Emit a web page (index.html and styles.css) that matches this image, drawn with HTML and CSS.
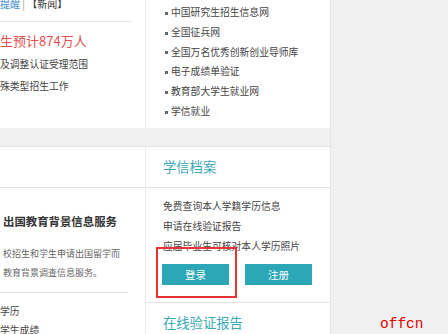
FILE: index.html
```html
<!DOCTYPE html>
<html lang="zh-CN">
<head>
    <meta charset="UTF-8">
    <meta name="viewport" content="width=device-width, initial-scale=1.0">
    <title>学信网</title>
    <link rel="stylesheet" href="styles.css">
</head>
<body>
    <div class="page">
        <div class="main">
            <div class="row row-top">
                <div class="col-left">
                    <div class="news-links"><a class="blue" href="#">提醒</a> <span class="sep">|</span> 【新闻】</div>
                    <div class="headline">生预计874万人</div>
                    <div class="plain-list">
                        <div>及调整认证受理范围</div>
                        <div>殊类型招生工作</div>
                    </div>
                </div>
                <div class="col-right">
                    <ul class="link-list">
                        <li>中国研究生招生信息网</li>
                        <li>全国征兵网</li>
                        <li>全国万名优秀创新创业导师库</li>
                        <li>电子成绩单验证</li>
                        <li>教育部大学生就业网</li>
                        <li>学信就业</li>
                    </ul>
                </div>
            </div>

            <div class="row row-bottom">
                <div class="col-left">
                    <div class="card-head"></div>
                    <div class="service">
                        <div class="service-title">出国教育背景信息服务</div>
                        <div class="service-desc">
                            <div>校招生和学生申请出国留学而</div>
                            <div>教育背景调查信息服务。</div>
                        </div>
                        <div class="service-list">
                            <div>学历</div>
                            <div>学生成绩</div>
                        </div>
                    </div>
                </div>
                <div class="col-right">
                    <div class="card-head"><div class="card-title">学信档案</div></div>
                    <div class="archive-body">
                        <div>免费查询本人学籍学历信息</div>
                        <div>申请在线验证报告</div>
                        <div>应届毕业生可核对本人学历照片</div>
                        <div class="btns">
                            <button class="btn">登录</button>
                            <button class="btn">注册</button>
                        </div>
                    </div>
                    <div class="card-head verify-head"><div class="card-title">在线验证报告</div></div>
                    <div class="mark-box"></div>
                </div>
            </div>
        </div>
        <div class="side">
            <span class="watermark">offcn</span>
        </div>
    </div>
</body>
</html>
```

FILE: styles.css
```css
* { box-sizing: border-box; }
body { margin: 0; background: #f0f0f0; font-family: "Noto Sans CJK SC", "Noto Sans", sans-serif; color: #444; }
a { text-decoration: none; }

.page { display: flex; height: 334px; overflow: hidden; }
.main { width: 331px; border-right: 1px solid #e6e6e6; }
.side { flex: 1; position: relative; }

.row { display: flex; background: #fff; }
.row-top { height: 128px; }
.row-bottom { margin-top: 18px; height: 188px; border-top: 1px solid #e4e4e4; }
.col-left { width: 146px; border-right: 1px solid #ebebeb; overflow: hidden; }
.col-right { flex: 1; position: relative; overflow: hidden; }

/* top left news */
.news-links { margin: -3px 13px 0 0; height: 25px; line-height: 14px; font-size: 10px; color: #333; border-bottom: 1px solid #e6e6e6; white-space: nowrap; }
.news-links .blue { color: #3c8fd0; }
.news-links .sep { color: #999; }
.headline { margin-top: 9px; font-size: 13px; line-height: 20px; color: #e25050; white-space: nowrap; }
.plain-list { margin-top: 2px; font-size: 9.8px; line-height: 22px; color: #444; white-space: nowrap; }

/* top right links */
.link-list { list-style: none; margin: 0; padding: 3px 0 0 19px; font-size: 9.8px; line-height: 19.8px; color: #444; white-space: nowrap; }
.link-list li::before { content: ""; display: inline-block; width: 3px; height: 3px; background: #666; margin-right: 3px; vertical-align: middle; }

/* bottom cards */
.card-head { height: 41px; border-bottom: 1px solid #e4e4e4; }
.card-title { line-height: 40px; padding-left: 17px; font-size: 13.3px; color: #3aa9b6; }
.verify-head { border-top: 1px solid #e4e4e4; border-bottom: none; }

.service { padding: 23px 0 0 3px; white-space: nowrap; }
.service-title { font-size: 11.4px; line-height: 20px; font-weight: bold; color: #333; }
.service-desc { margin-top: 13px; font-size: 9px; line-height: 19px; color: #666; }
.service-list { margin: 10px 17px 0 -3px; padding-top: 9px; border-top: 1px solid #e6e6e6; font-size: 9.8px; line-height: 19px; color: #444; }

.archive-body { padding: 8px 0 17px 17px; font-size: 9.8px; line-height: 20px; color: #444; white-space: nowrap; }
.btns { display: flex; gap: 16px; margin: 8px 0 0 -1px; }
.btn { width: 67px; height: 21px; padding: 0; border: none; background: #2ca7b6; color: #fff; font-family: inherit; font-size: 10.5px; cursor: pointer; }

.mark-box { position: absolute; left: 10px; top: 100px; width: 81px; height: 51px; border: 2px solid #e43434; }

.watermark { position: absolute; left: 49px; top: 316px; font-family: "Liberation Mono", monospace; font-size: 14.5px; line-height: 16px; color: #dd0000; }
```
